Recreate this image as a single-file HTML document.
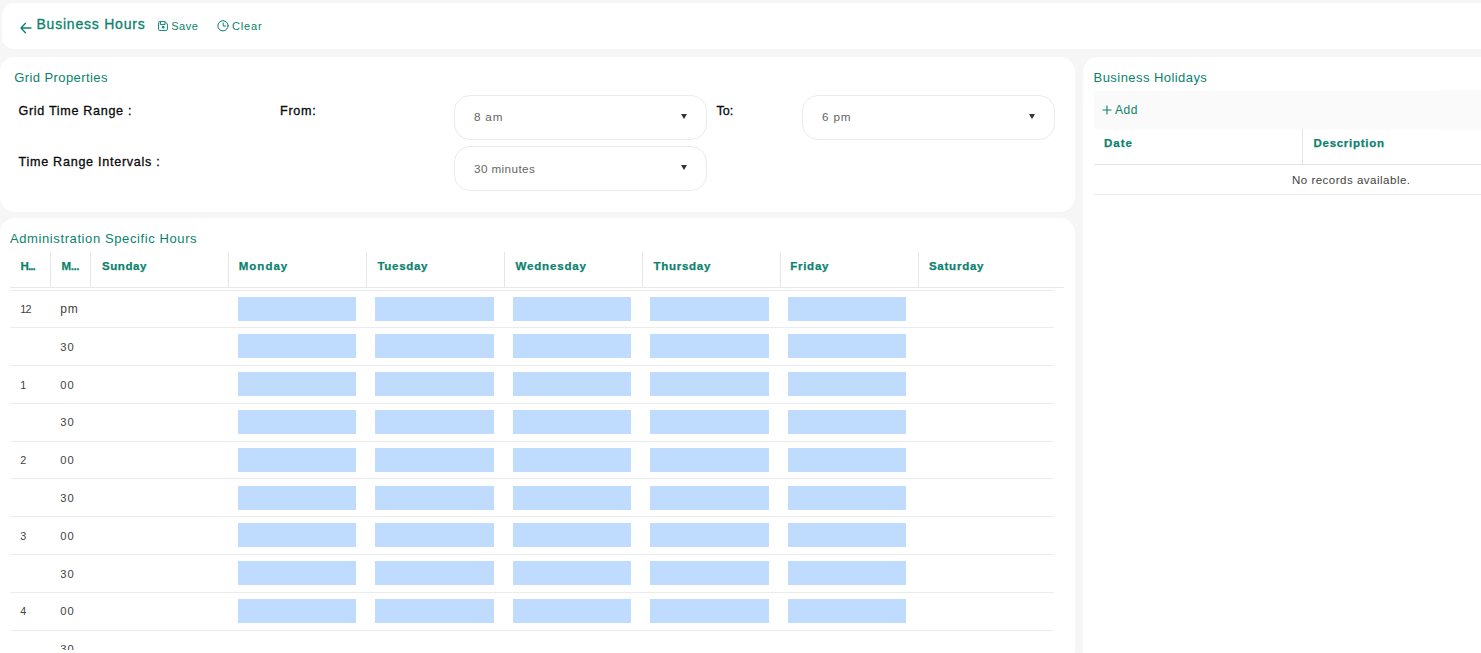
<!DOCTYPE html>
<html lang="en">
<head>
<meta charset="utf-8">
<title>Business Hours</title>
<style>
*{box-sizing:border-box;margin:0;padding:0}
html,body{width:1481px;height:653px;overflow:hidden}
body{background:#f6f6f6;font-family:"Liberation Sans",sans-serif;font-size:12px;color:#424242;position:relative}
.card{position:absolute;background:#fff;border-radius:15px}
.t{position:absolute;white-space:nowrap;line-height:1}
.teal{color:#0a826d}
.med{-webkit-text-stroke:0.3px currentColor}

/* top bar */
#topbar{left:2px;top:3px;width:1500px;height:46px;border-radius:12px}
#back{position:absolute;left:18px;top:18.5px;width:12px;height:12px}
#title{left:34.5px;top:13.5px;font-size:14px;letter-spacing:.78px}
#saveico{position:absolute;left:156px;top:18px;width:10px;height:10px}
#save{left:169.2px;top:18px;font-size:11px;letter-spacing:.55px}
#clearico{position:absolute;left:215px;top:17px;width:12px;height:12px}
#clear{left:229.9px;top:18px;font-size:11px;letter-spacing:.85px}

/* grid properties */
#gridprops{left:0;top:57px;width:1075px;height:154.5px}
#gp-title{left:14.3px;top:14px;font-size:13px;letter-spacing:.41px}
#lbl-range{left:18.5px;top:48px;font-size:12.6px;color:#0a0a0a;letter-spacing:.67px}
#lbl-from{left:280px;top:48px;font-size:12.6px;color:#0a0a0a;letter-spacing:.7px}
#lbl-to{left:716.4px;top:48px;font-size:12.6px;color:#0a0a0a;letter-spacing:0px}
#lbl-int{left:18.5px;top:99px;font-size:12.6px;color:#0a0a0a;letter-spacing:.72px}
.select{position:absolute;border:1px solid #ebebeb;border-radius:16px;background:#fff;width:253px;height:45px}
.select .val{position:absolute;left:19px;top:14.5px;font-size:11.7px;letter-spacing:.4px;line-height:1;color:#666;white-space:nowrap}
.select .arr{position:absolute;right:19px;top:18px;width:0;height:0;border-left:3.5px solid transparent;border-right:3.5px solid transparent;border-top:5px solid #333}
#sel-from{left:454px;top:38px}
#sel-to{left:802px;top:38px}
#sel-int{left:454px;top:89px}

/* admin hours */
#admin{left:0;top:218px;width:1075px;height:446px}
#ad-title{left:10px;top:14px;font-size:13px;letter-spacing:.6px}
#thead{position:absolute;left:10px;top:34px;width:1054px;height:36px;border-bottom:1px solid #e8e8e8}
#thead .th{position:absolute;top:0;height:35px;border-left:1px solid #e6e6e6;font-weight:bold;font-size:11.5px;color:#0a826d;-webkit-text-stroke:.25px #0a826d}
#thead .th span{position:absolute;left:10.5px;top:8.5px;line-height:1;white-space:nowrap;letter-spacing:.5px}
#tbody{position:absolute;left:10px;top:72px;width:1044px;height:359.5px;overflow:hidden;border-top:1px solid #ececec}
.row{position:absolute;left:0;width:1044px;height:37.8px;border-bottom:1px solid #ececec}
.row .h,.row .m{position:absolute;top:13.6px;line-height:1;font-size:10.8px;color:#424242;white-space:nowrap}
.row .h{left:10.3px;letter-spacing:-.8px}
.row .m{left:50.3px;letter-spacing:1px;font-size:11.2px}
.row i{position:absolute;top:6.2px;height:24px;width:118px;background:#bfdbfe;display:block}
.row .ca{left:228px;width:118px}
.row .cb{left:365px;width:119px}
.row .cc{left:503px;width:118px}
.row .cd{left:640px;width:119px}
.row .ce{left:778px;width:118px}

#th-h{letter-spacing:-.9px!important}
#th-m{letter-spacing:-.4px!important}
#th-sun{letter-spacing:.56px!important;margin-left:.5px}
#th-mon{letter-spacing:1.02px!important;margin-left:-.8px}
#th-tue{letter-spacing:.7px!important}
#th-wed{letter-spacing:.85px!important}
#th-thu{letter-spacing:.73px!important}
#th-fri{letter-spacing:.74px!important;margin-left:-1.3px}
#th-sat{letter-spacing:.77px!important;margin-left:-.6px}
#hh-date{letter-spacing:.93px!important}
#hh-desc{letter-spacing:.72px!important;margin-left:.4px}
#v-to{letter-spacing:.85px}
#v-int{top:15.5px!important}
#v-from{letter-spacing:.8px}

/* holidays */
#holidays{left:1083px;top:57px;width:420px;height:620px}
#ho-title{left:10.6px;top:13.5px;font-size:13px;letter-spacing:.44px}
#toolbar{position:absolute;left:10.6px;top:34px;width:420px;height:38px;background:#fafafa}
#tbspacer{position:absolute;left:356px;top:31.500px;width:70px;height:42px;background:#fcfcfc}
#plus{position:absolute;left:8px;top:14px;width:10px;height:10px}
#add{left:21.4px;top:13px;font-size:12px;letter-spacing:.6px}
#hhead{position:absolute;left:10.6px;top:72px;width:420px;height:36px;border-bottom:1px solid #e4e4e4}
#hhead .th{position:absolute;top:0;height:35px;font-weight:bold;font-size:11.5px;color:#0a826d;-webkit-text-stroke:.25px #0a826d}
#hhead .th span{position:absolute;left:10.5px;top:9px;line-height:1;white-space:nowrap;letter-spacing:.5px}
#norec{left:209px;top:118px;font-size:11.5px;color:#424242;letter-spacing:.5px}
#hline{position:absolute;left:10.6px;top:137px;width:420px;height:1px;background:#ececec}
</style>
</head>
<body>

<div class="card" id="topbar">
  <svg id="back" viewBox="0 0 12 12" fill="none" stroke="#0a826d" stroke-width="1.3" stroke-linecap="round" stroke-linejoin="round"><path d="M11 6H1M5.5 1.2L1 6l4.500 4.800"/></svg>
  <span class="t teal med" id="title">Business Hours</span>
  <svg id="saveico" viewBox="0 0 10 10" fill="none" stroke="#0a826d" stroke-width="1" stroke-linejoin="round"><path d="M0.600 1.600a1 1 0 0 1 1-1h5.300l2.500 2.500v5.300a1 1 0 0 1-1 1h-6.800a1 1 0 0 1-1-1z"/><path d="M2.400 0.600v3h4.600v-3"/><circle cx="5.200" cy="6.300" r="1.250" fill="#0a826d" stroke="none"/></svg>
  <span class="t teal" id="save">Save</span>
  <svg id="clearico" viewBox="0 0 12 12" fill="none" stroke="#0a826d" stroke-width="1" stroke-linecap="round"><circle cx="6" cy="5.800" r="5.100"/><path d="M6.200 3v3h2.400"/></svg>
  <span class="t teal" id="clear">Clear</span>
</div>

<div class="card" id="gridprops">
  <span class="t teal" id="gp-title">Grid Properties</span>
  <span class="t med" id="lbl-range">Grid Time Range :</span>
  <span class="t med" id="lbl-from">From:</span>
  <div class="select" id="sel-from"><span class="val" id="v-from">8 am</span><span class="arr"></span></div>
  <span class="t med" id="lbl-to">To:</span>
  <div class="select" id="sel-to"><span class="val" id="v-to">6 pm</span><span class="arr"></span></div>
  <span class="t med" id="lbl-int">Time Range Intervals :</span>
  <div class="select" id="sel-int"><span class="val" id="v-int">30 minutes</span><span class="arr"></span></div>
</div>

<div class="card" id="admin">
  <span class="t teal" id="ad-title">Administration Specific Hours</span>
  <div id="thead">
    <div class="th" style="left:0;width:40.5px;border-left:none"><span id="th-h">H...</span></div>
    <div class="th" style="left:40px;width:40px"><span id="th-m">M...</span></div>
    <div class="th" style="left:80px;width:138px"><span id="th-sun">Sunday</span></div>
    <div class="th" style="left:218px;width:138px"><span id="th-mon">Monday</span></div>
    <div class="th" style="left:356px;width:138px"><span id="th-tue">Tuesday</span></div>
    <div class="th" style="left:494px;width:138px"><span id="th-wed">Wednesday</span></div>
    <div class="th" style="left:632px;width:138px"><span id="th-thu">Thursday</span></div>
    <div class="th" style="left:770px;width:138px"><span id="th-fri">Friday</span></div>
    <div class="th" style="left:908px;width:145px"><span id="th-sat">Saturday</span></div>
  </div>
  <div id="tbody">
    <div class="row" style="top:-0.6px"><span class="h">12</span><span class="m" style="font-size:12px;letter-spacing:.7px;margin-top:-1px">pm</span><i class="ca"></i><i class="cb"></i><i class="cc"></i><i class="cd"></i><i class="ce"></i></div>
    <div class="row" style="top:37.2px"><span class="m">30</span><i class="ca"></i><i class="cb"></i><i class="cc"></i><i class="cd"></i><i class="ce"></i></div>
    <div class="row" style="top:75.0px"><span class="h">1</span><span class="m">00</span><i class="ca"></i><i class="cb"></i><i class="cc"></i><i class="cd"></i><i class="ce"></i></div>
    <div class="row" style="top:112.8px"><span class="m">30</span><i class="ca"></i><i class="cb"></i><i class="cc"></i><i class="cd"></i><i class="ce"></i></div>
    <div class="row" style="top:150.6px"><span class="h">2</span><span class="m">00</span><i class="ca"></i><i class="cb"></i><i class="cc"></i><i class="cd"></i><i class="ce"></i></div>
    <div class="row" style="top:188.4px"><span class="m">30</span><i class="ca"></i><i class="cb"></i><i class="cc"></i><i class="cd"></i><i class="ce"></i></div>
    <div class="row" style="top:226.2px"><span class="h">3</span><span class="m">00</span><i class="ca"></i><i class="cb"></i><i class="cc"></i><i class="cd"></i><i class="ce"></i></div>
    <div class="row" style="top:264.0px"><span class="m">30</span><i class="ca"></i><i class="cb"></i><i class="cc"></i><i class="cd"></i><i class="ce"></i></div>
    <div class="row" style="top:301.8px"><span class="h">4</span><span class="m">00</span><i class="ca"></i><i class="cb"></i><i class="cc"></i><i class="cd"></i><i class="ce"></i></div>
    <div class="row" style="top:339.6px"><span class="m">30</span></div>
  </div>
</div>

<div class="card" id="holidays">
  <span class="t teal" id="ho-title">Business Holidays</span>
  <div id="tbspacer"></div>
  <div id="toolbar"><svg id="plus" viewBox="0 0 10 10" stroke="#0a826d" stroke-width="1.100" fill="none"><path d="M5 0.500v9M0.500 5h9"/></svg><span class="t teal" id="add">Add</span></div>
  <div id="hhead">
    <div class="th" style="left:0;width:208px"><span id="hh-date">Date</span></div>
    <div class="th" style="left:208px;width:212px;border-left:1px solid #e4e4e4"><span id="hh-desc">Description</span></div>
  </div>
  <span class="t" id="norec">No records available.</span>
  <div id="hline"></div>
</div>

</body>
</html>
